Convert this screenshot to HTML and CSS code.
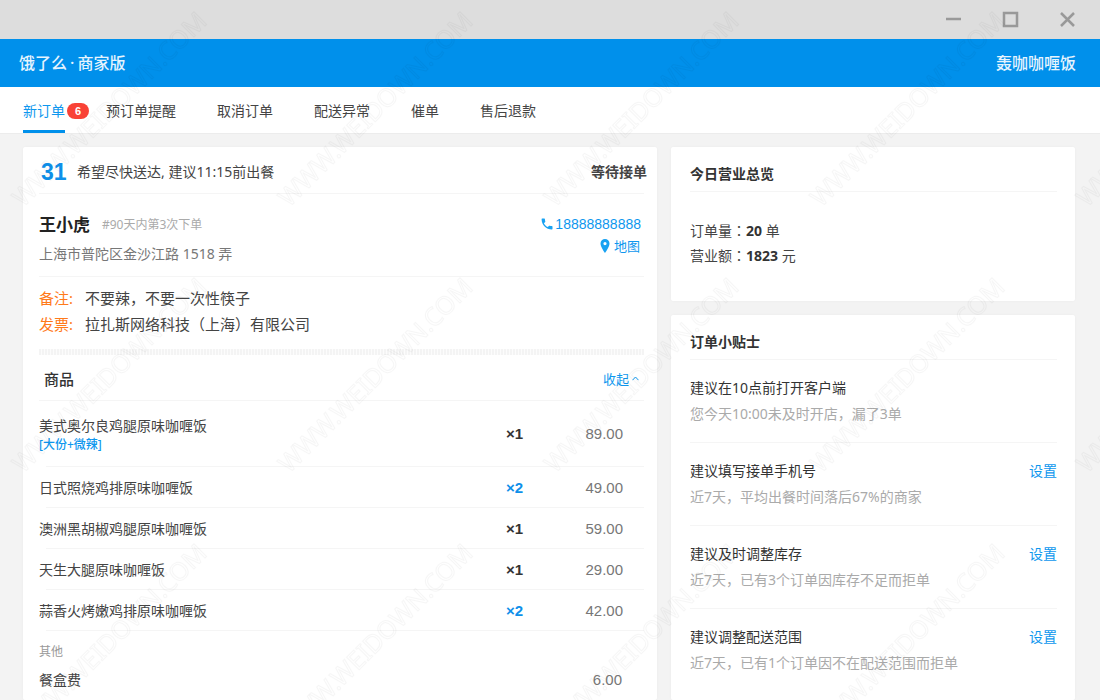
FILE: index.html
```html
<!DOCTYPE html>
<html lang="zh-CN">
<head>
<meta charset="utf-8">
<title>饿了么·商家版</title>
<link rel="stylesheet" href="styles.css">
</head>
<body>
<div class="titlebar">
  <button class="win-btn" type="button" aria-label="最小化"><svg width="18" height="18" viewBox="0 0 18 18"><path d="M2 9h15"/></svg></button>
  <button class="win-btn" type="button" aria-label="最大化"><svg width="18" height="18" viewBox="0 0 18 18"><path d="M3 3h13v13H3z"/></svg></button>
  <button class="win-btn" type="button" aria-label="关闭"><svg width="18" height="18" viewBox="0 0 18 18"><path d="M3 3l13 13M16 3L3 16"/></svg></button>
</div>
<header class="brandbar">
  <h1 class="brand">饿了么<span class="dot">·</span>商家版</h1>
  <span class="shop">轰咖咖喱饭</span>
</header>
<nav class="tabs">
  <a class="tab active" href="#new">新订单<span class="badge">6</span></a>
  <a class="tab" href="#pre">预订单提醒</a>
  <a class="tab" href="#cancel">取消订单</a>
  <a class="tab" href="#delivery">配送异常</a>
  <a class="tab" href="#urge">催单</a>
  <a class="tab" href="#refund">售后退款</a>
</nav>
<main class="content">
  <section class="card order">
    <div class="order-head">
      <span class="order-no">31</span>
      <span class="order-hint">希望尽快送达, 建议11:15前出餐</span>
      <span class="order-status">等待接单</span>
    </div>
    <hr class="rule">
    <div class="customer">
      <div class="who">
        <div class="name-line"><h2 class="name">王小虎</h2><span class="times">#90天内第3次下单</span></div>
        <div class="address">上海市普陀区金沙江路 1518 弄</div>
      </div>
      <div class="contact">
        <a class="phone" href="tel:18888888888"><svg width="12" height="12" viewBox="0 0 12 12"><path d="M.6 1.2C.5.8.8.5 1.200.5h2.100c.4 0 .6.2.6.6 0 .8.1 1.500.4 2.200.1.200 0 .5-.1.600L2.900 5.200c.9 1.800 2.100 3 3.900 3.900l1.300-1.300c.2-.2.4-.2.6-.1.7.2 1.400.4 2.200.4.400 0 .6.2.6.6v2.100c0 .4-.2.6-.6.6C5.200 11.400.6 6.900.6 1.200z"/></svg>18888888888</a>
        <a class="map" href="#map"><svg width="10" height="14" viewBox="0 0 10 14"><path fill-rule="evenodd" d="M5 0a4.500 4.500 0 0 0-4.500 4.500C.5 8 5 14 5 14s4.500-6 4.500-9.500A4.500 4.500 0 0 0 5 0zm0 3a1.600 1.600 0 1 1 0 3.200A1.600 1.600 0 0 1 5 3z"/></svg>地图</a>
      </div>
    </div>
    <hr class="rule">
    <dl class="remarks">
      <div class="remark"><dt>备注:</dt><dd>不要辣，不要一次性筷子</dd></div>
      <div class="remark"><dt>发票:</dt><dd>拉扎斯网络科技（上海）有限公司</dd></div>
    </dl>
    <div class="perforation"></div>
    <div class="goods-head">
      <h3 class="goods-title">商品</h3>
      <button class="fold" type="button">收起<svg width="7" height="5" viewBox="0 0 7 5"><path d="M.5 4.200L3.500 1l3 3.200"/></svg></button>
    </div>
    <hr class="rule">
    <table class="goods">
      <tbody>
        <tr class="tall"><td>美式奥尔良鸡腿原味咖喱饭<span class="spec">[大份+微辣]</span></td><td class="qty">×1</td><td class="price">89.00</td></tr>
        <tr><td>日式照烧鸡排原味咖喱饭</td><td class="qty many">×2</td><td class="price">49.00</td></tr>
        <tr><td>澳洲黑胡椒鸡腿原味咖喱饭</td><td class="qty">×1</td><td class="price">59.00</td></tr>
        <tr><td>天生大腿原味咖喱饭</td><td class="qty">×1</td><td class="price">29.00</td></tr>
        <tr><td>蒜香火烤嫩鸡排原味咖喱饭</td><td class="qty many">×2</td><td class="price">42.00</td></tr>
      </tbody>
    </table>
    <div class="extra">
      <h4 class="extra-title">其他</h4>
      <div class="fee"><span>餐盒费</span><span class="price">6.00</span></div>
    </div>
  </section>
  <aside class="side">
    <section class="card panel overview">
      <h3 class="panel-title">今日营业总览</h3>
      <div class="stats">
        <div>订单量<span class="colon" lang="zh-TW">：</span><b>20</b> 单</div>
        <div>营业额<span class="colon" lang="zh-TW">：</span><b>1823</b> 元</div>
      </div>
    </section>
    <section class="card panel grow">
      <h3 class="panel-title">订单小贴士</h3>
      <ul class="tips">
        <li class="tip"><div><h4>建议在10点前打开客户端</h4><p>您今天10:00未及时开店，漏了3单</p></div></li>
        <li class="tip"><div><h4>建议填写接单手机号</h4><p>近7天，平均出餐时间落后67%的商家</p></div><a href="#phone">设置</a></li>
        <li class="tip"><div><h4>建议及时调整库存</h4><p>近7天，已有3个订单因库存不足而拒单</p></div><a href="#stock">设置</a></li>
        <li class="tip"><div><h4>建议调整配送范围</h4><p>近7天，已有1个订单因不在配送范围而拒单</p></div><a href="#range">设置</a></li>
      </ul>
    </section>
  </aside>
</main>
<svg class="watermark" aria-hidden="true">
  <defs>
    <pattern id="mark" width="266" height="266" patternUnits="userSpaceOnUse">
      <text transform="translate(23 208) rotate(-45)">WWW.WEIDOWN.COM</text>
    </pattern>
  </defs>
  <rect width="100%" height="100%" fill="url(#mark)"/>
</svg>
</body>
</html>
```
FILE: styles.css
```css
* { box-sizing: border-box; }

body {
  margin: 0;
  height: 100vh;
  display: flex;
  flex-direction: column;
  overflow: hidden;
  background: #f3f3f3;
  color: #444;
  font: 14px/20px "Noto Sans", "Noto Sans CJK SC", sans-serif;
}

h1, h2, h3, h4, p, ul, dl, dd { margin: 0; padding: 0; }
a { color: #0e97ee; text-decoration: none; }
button { border: 0; padding: 0; background: none; font: inherit; }

.titlebar {
  flex: none;
  height: 39px;
  padding: 0 24px 2px;
  display: flex;
  align-items: center;
  justify-content: flex-end;
  gap: 39px;
  background: #ddd;
}
.win-btn { height: 18px; }
.win-btn svg { display: block; fill: none; stroke: #999; stroke-width: 2.500; }

.brandbar {
  flex: none;
  height: 48px;
  padding: 0 24px 0 19px;
  display: flex;
  align-items: center;
  justify-content: space-between;
  background: #0090eb;
  color: #e6f4fe;
  font-size: 16px;
  font-weight: 500;
}
.brand { font-size: 16px; font-weight: 500; }
.dot { margin: 0 3px; }

.tabs {
  flex: none;
  height: 47px;
  padding: 0 23px;
  display: flex;
  gap: 41px;
  background: #fff;
  border-bottom: 1px solid #ececec;
}
.tab { position: relative; line-height: 48px; color: #444; white-space: nowrap; }
.tab.active { color: #0e97ee; border-bottom: 3px solid #0090eb; }
.badge {
  position: absolute;
  top: 16px;
  left: 44px;
  width: 22px;
  height: 16px;
  border-radius: 8px;
  background: #f94236;
  color: #fff;
  font: bold 11px/16px "Liberation Sans", sans-serif;
  text-align: center;
}

.content {
  flex: 1;
  min-height: 0;
  padding: 13px 25px 0 23px;
  display: grid;
  grid-template-columns: minmax(0, 634fr) minmax(0, 404fr);
  gap: 14px;
}
.card { background: #fff; border-radius: 2px; box-shadow: 0 0 2px #e9e9e9; }
.rule { margin: 0 13px 0 16px; border: 0; height: 1px; background: #f5f5f5; }

.order-head { height: 46px; padding: 3px 10px 0 18px; display: flex; align-items: center; }
.order-no { width: 36px; color: #0e90ea; font: bold 23px/28px "Liberation Sans", sans-serif; }
.order-hint { flex: 1; }
.order-status { font-weight: 700; }

.customer { padding: 18px 16px 12px; display: flex; justify-content: space-between; }
.name-line { display: flex; align-items: center; gap: 12px; height: 26px; margin-bottom: 6px; }
.name { font-size: 17px; color: #222; }
.times { font-size: 12px; color: #aaa; }
.address { color: #777; }
.contact { display: flex; flex-direction: column; align-items: flex-end; gap: 2px; padding-top: 2px; }
.phone { display: flex; align-items: center; gap: 2px; font: 14px/20px "Liberation Sans", sans-serif; }
.phone svg, .map svg { fill: #18a2f2; }
.map { display: flex; align-items: center; gap: 4px; font-size: 13px; padding-right: 1px; }

.remarks { padding: 8px 16px 12px; font-size: 15px; line-height: 26px; }
.remark { display: flex; }
.remark dt { width: 46px; color: #ff7a1a; }
.perforation {
  height: 6px;
  margin: 0 13px 0 16px;
  background: repeating-linear-gradient(90deg, #f4f4f4 0 2px, #fcfcfc 2px 3px);
}

.goods-head { height: 45px; padding: 2px 18px 0 21px; display: flex; align-items: center; justify-content: space-between; }
.goods-title { font-size: 15px; font-weight: 500; color: #333; }
.fold { display: flex; align-items: center; gap: 3px; font-size: 13px; color: #0e97ee; }
.fold svg { fill: none; stroke: #0e97ee; }

.goods { width: calc(100% - 29px); margin-left: 16px; border-spacing: 0; }
.goods tr {
  height: 41px;
  background: linear-gradient(#f5f5f5, #f5f5f5) no-repeat right bottom / calc(100% - 7px) 1px;
}
.goods tr.tall { height: 66px; }
.goods td { padding: 0; }
.goods td.qty { width: 90px; text-align: right; color: #333; font: bold 15px/20px "Liberation Sans", sans-serif; }
.goods td.many { color: #0e90ea; }
.goods td.price { width: 121px; padding-right: 21px; text-align: right; }
.price { color: #777; font: 15px/20px "Liberation Sans", sans-serif; }
.spec { display: block; font-size: 12px; line-height: 17px; font-weight: 500; color: #0e97ee; }

.extra { padding: 11px 35px 0 16px; }
.extra-title { font-size: 12px; font-weight: 400; color: #999; margin-bottom: 8px; }
.fee { display: flex; justify-content: space-between; }

.side { display: flex; flex-direction: column; gap: 14px; min-height: 0; }
.grow { flex: 1; }
.panel { padding: 0 18px 0 19px; }
.overview { height: 154px; }
.panel-title { padding: 17px 0 7px; font-size: 14px; color: #333; border-bottom: 1px solid #f5f5f5; }
.stats { padding-top: 26px; line-height: 25px; }
.stats b { color: #333; }
.colon { font-family: "Noto Sans CJK TC", sans-serif; }

.tips { list-style: none; }
.tip { display: flex; justify-content: space-between; padding: 18px 0; border-bottom: 1px solid #f5f5f5; }
.tip:last-child { border-bottom: 0; }
.tip h4 { font-size: 14px; font-weight: 400; color: #333; margin-bottom: 6px; }
.tip p { color: #aaa; }

.watermark { position: fixed; inset: 0; width: 100%; height: 100%; pointer-events: none; }
.watermark text { font: 25px "Noto Sans", sans-serif; fill: none; stroke: #000; stroke-opacity: 0.035; }
```
